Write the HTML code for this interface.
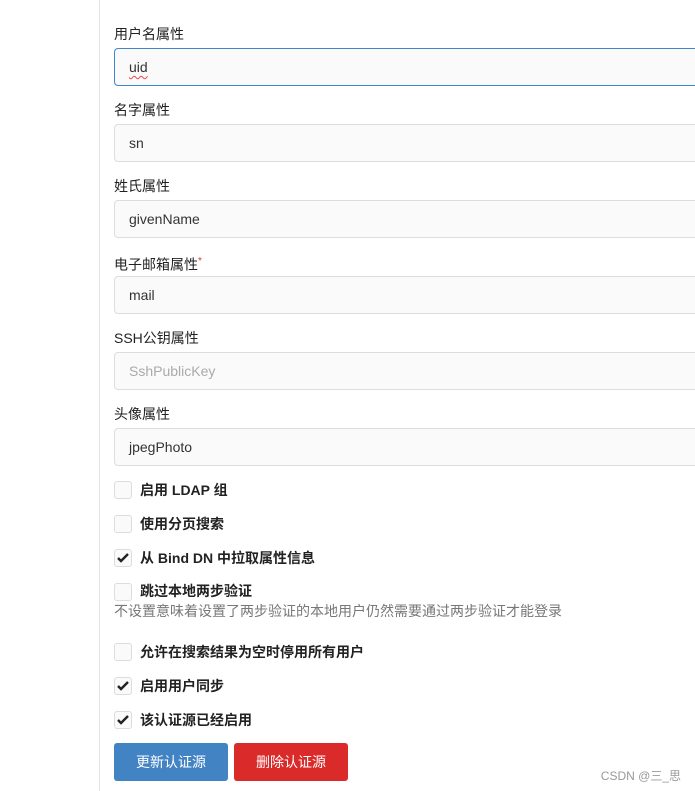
<!DOCTYPE html>
<html><head><meta charset="utf-8"><style>
body{margin:0;width:695px;height:791px;background:#fff;position:relative;overflow:hidden;font-family:"Liberation Sans","Noto Sans CJK SC",sans-serif;color:#222;}
.vl{position:absolute;left:99px;top:0;width:1px;height:791px;background:#e3e3e3}
.lb{position:absolute;left:114px;font-size:14px;line-height:16px;color:#222}
.in{position:absolute;left:114px;width:600px;border:1px solid #ddd;border-radius:4px;background:#fafafa;box-sizing:border-box;height:38px;font-size:14px;line-height:36px;padding-left:14px;color:#333}
.in.f{border-color:#3f86cd}
.ph{color:#aaa}
.cb{position:absolute;left:114px;width:16px;height:16px;border:1px solid #ddd;border-radius:3px;background:#fafafa}
.cb svg{position:absolute;left:1px;top:2px}
.cl{position:absolute;left:140px;font-size:14px;font-weight:bold;color:#222;line-height:16px}
.hint{position:absolute;left:114px;top:601px;font-size:14px;color:#777}
.btn{position:absolute;top:743px;height:38px;border-radius:3px;color:#fff;font-size:14px;line-height:38px;text-align:center}
.wm{position:absolute;right:14px;top:767px;font-size:12px;color:#999}
.sq{text-decoration:underline wavy #e44;text-underline-offset:3px;text-decoration-thickness:1px}
</style></head><body>
<div class="vl"></div>
<div class="lb" style="top:26px">用户名属性</div>
<div class="in f" style="top:48px"><span class="sq">uid</span></div>
<div class="lb" style="top:102px">名字属性</div>
<div class="in" style="top:124px">sn</div>
<div class="lb" style="top:178px">姓氏属性</div>
<div class="in" style="top:200px">givenName</div>
<div class="lb" style="top:254px">电子邮箱属性<sup style="color:#d33;font-size:10px">*</sup></div>
<div class="in" style="top:276px">mail</div>
<div class="lb" style="top:330px">SSH公钥属性</div>
<div class="in" style="top:352px"><span class="ph">SshPublicKey</span></div>
<div class="lb" style="top:406px">头像属性</div>
<div class="in" style="top:428px">jpegPhoto</div>

<div class="cb" style="top:481px"></div><div class="cl" style="top:482px">启用 LDAP 组</div>
<div class="cb" style="top:515px"></div><div class="cl" style="top:516px">使用分页搜索</div>
<div class="cb" style="top:549px"><svg width="14" height="12" viewBox="0 0 14 12"><path d="M2 6l3 3 7-7" stroke="#222" stroke-width="2.4" fill="none"/></svg></div><div class="cl" style="top:550px">从 Bind DN 中拉取属性信息</div>
<div class="cb" style="top:583px"></div><div class="cl" style="top:583px">跳过本地两步验证</div>
<div class="hint">不设置意味着设置了两步验证的本地用户仍然需要通过两步验证才能登录</div>
<div class="cb" style="top:643px"></div><div class="cl" style="top:644px">允许在搜索结果为空时停用所有用户</div>
<div class="cb" style="top:677px"><svg width="14" height="12" viewBox="0 0 14 12"><path d="M2 6l3 3 7-7" stroke="#222" stroke-width="2.4" fill="none"/></svg></div><div class="cl" style="top:678px">启用用户同步</div>
<div class="cb" style="top:711px"><svg width="14" height="12" viewBox="0 0 14 12"><path d="M2 6l3 3 7-7" stroke="#222" stroke-width="2.4" fill="none"/></svg></div><div class="cl" style="top:712px">该认证源已经启用</div>

<div class="btn" style="left:114px;width:114px;background:#4283c4">更新认证源</div>
<div class="btn" style="left:234px;width:114px;background:#db2a2a">删除认证源</div>
<div class="wm">CSDN @三_思</div>
</body></html>
